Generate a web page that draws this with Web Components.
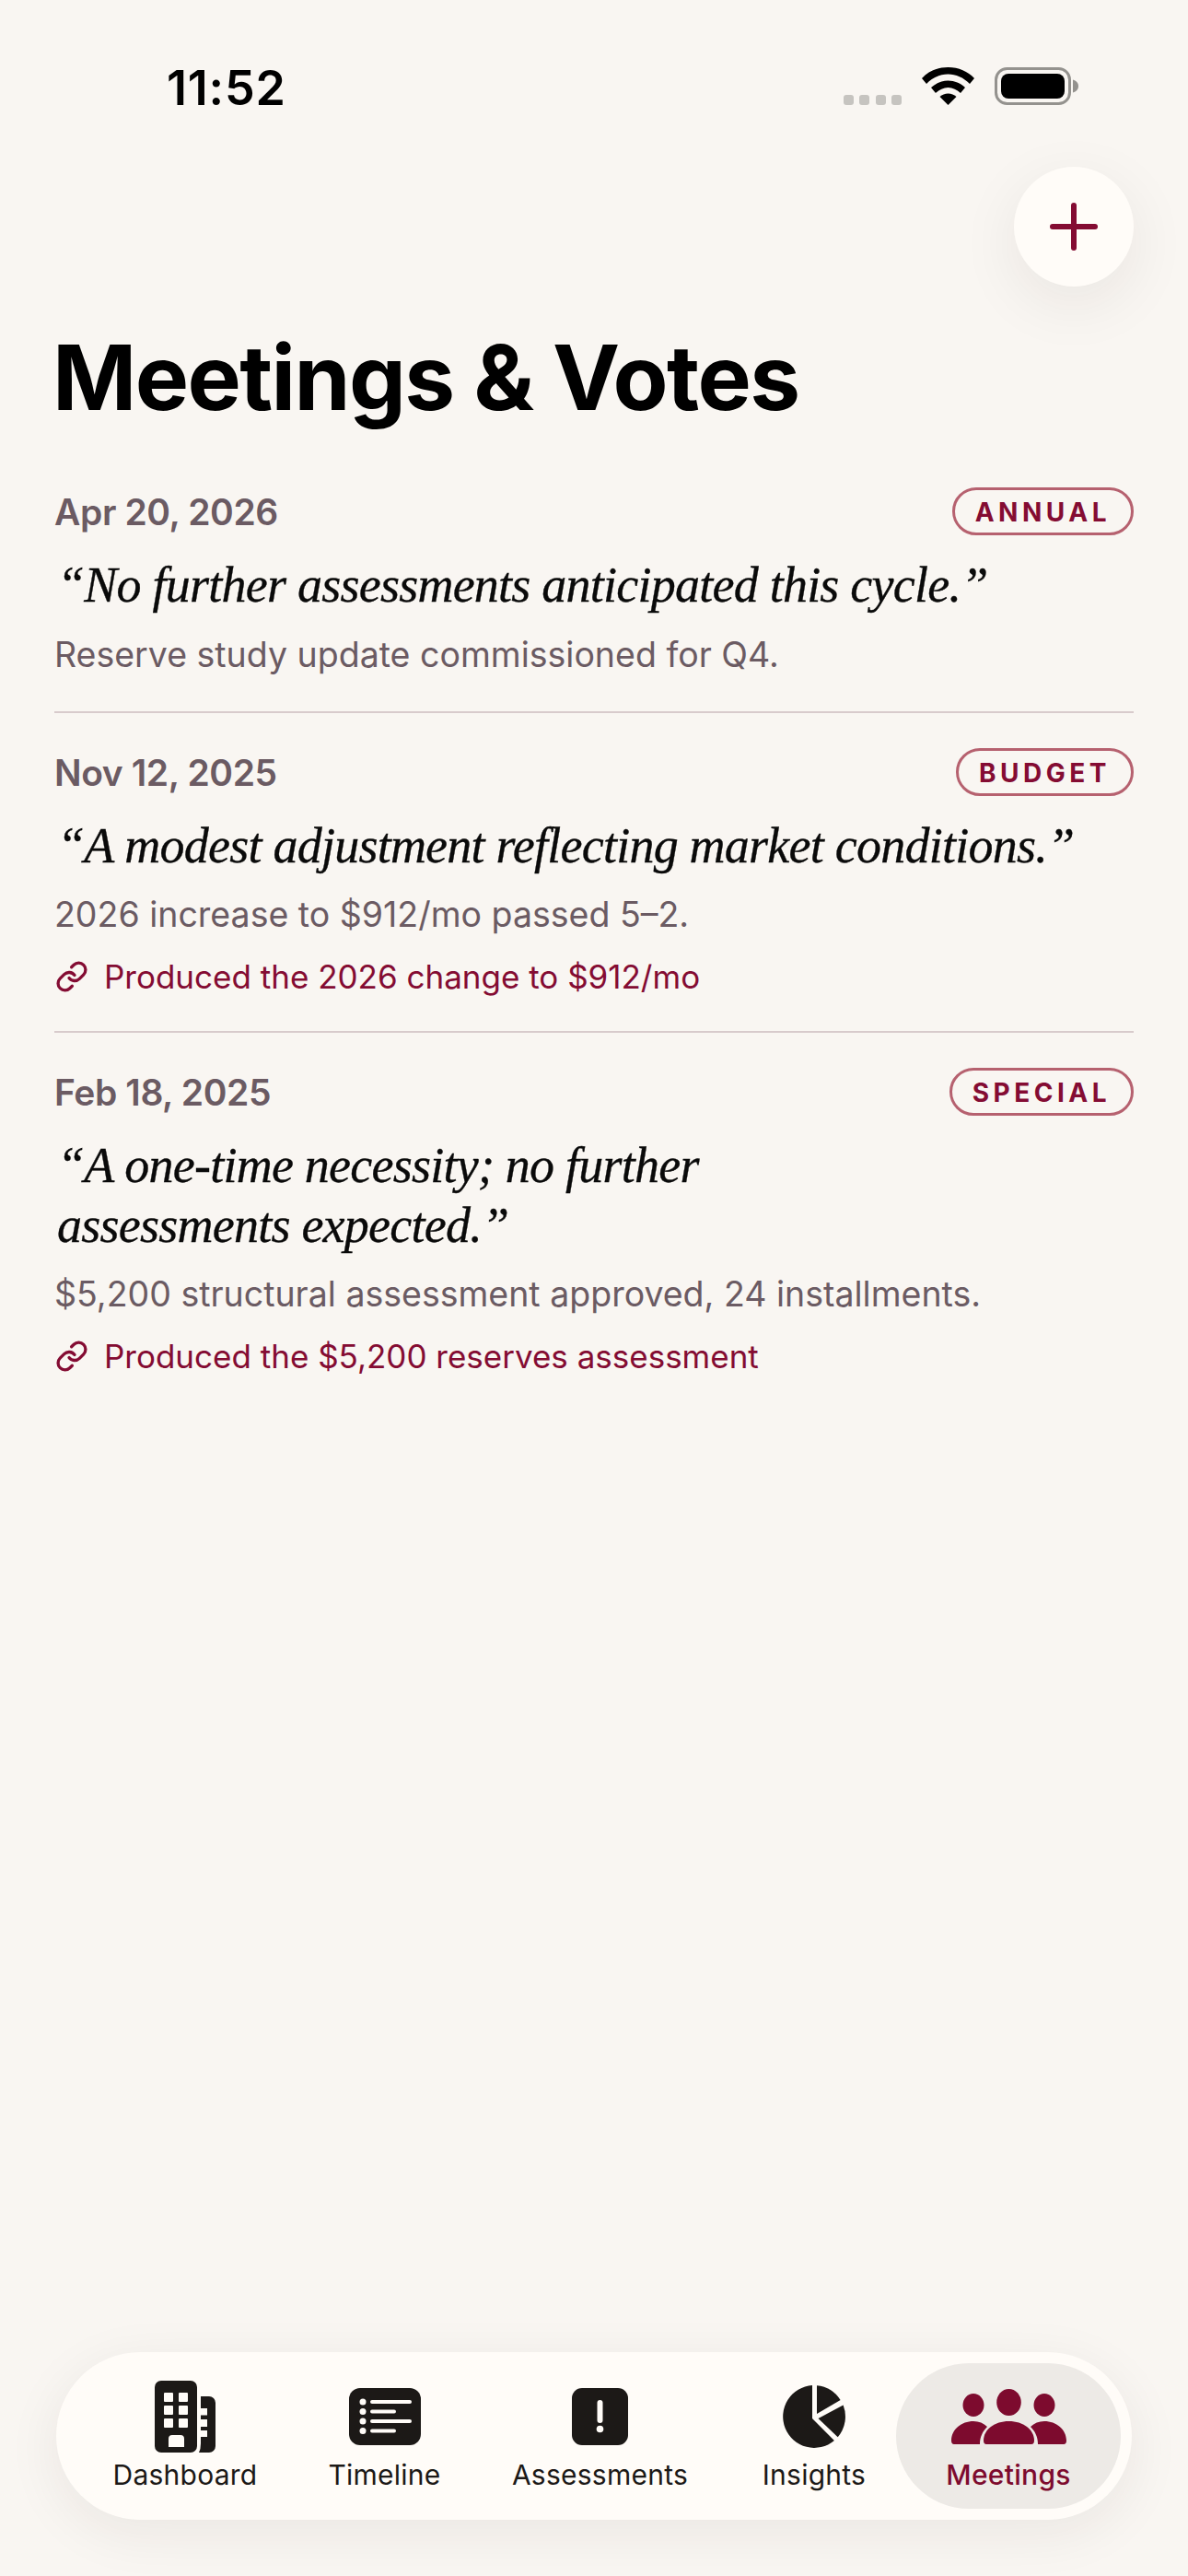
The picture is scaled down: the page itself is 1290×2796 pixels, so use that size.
<!DOCTYPE html>
<html lang="en">
<head>
<meta charset="utf-8">
<title>Meetings &amp; Votes</title>
<style>
  html, body { margin: 0; background: #f9f6f2; }
  body { font-family: Inter, "Liberation Sans", sans-serif; }
</style>
</head>
<body>
<app-screen>
  <status-bar slot="status" time="11:52"></status-bar>
  <fab-button slot="action"></fab-button>
  <page-title slot="title">Meetings &amp; Votes</page-title>

  <meeting-row date="Apr 20, 2026" kind="ANNUAL">
    <span slot="quote">“No further assessments anticipated this cycle.”</span>
    <span slot="note">Reserve study update commissioned for Q4.</span>
  </meeting-row>
  <meeting-row date="Nov 12, 2025" kind="BUDGET">
    <span slot="quote">“A modest adjustment reflecting market conditions.”</span>
    <span slot="note">2026 increase to $912/mo passed 5–2.</span>
    <span slot="link">Produced the 2026 change to $912/mo</span>
  </meeting-row>
  <meeting-row date="Feb 18, 2025" kind="SPECIAL" last>
    <span slot="quote">“A one-time necessity; no further<br>assessments expected.”</span>
    <span slot="note">$5,200 structural assessment approved, 24 installments.</span>
    <span slot="link">Produced the $5,200 reserves assessment</span>
  </meeting-row>

  <tab-bar slot="tabs">
    <tab-item label="Dashboard">
      <svg width="66" height="78" viewBox="0 0 66 78" fill="#1c1917">
        <path fill-rule="evenodd" d="M7 0H39a7 7 0 0 1 7 7V71a7 7 0 0 1-7 7H7a7 7 0 0 1-7-7V7a7 7 0 0 1 7-7ZM11 13a1 1 0 0 0-1 1V22a1 1 0 0 0 1 1H19a1 1 0 0 0 1-1V14a1 1 0 0 0-1-1ZM27 13a1 1 0 0 0-1 1V22a1 1 0 0 0 1 1H35a1 1 0 0 0 1-1V14a1 1 0 0 0-1-1ZM11 27a1 1 0 0 0-1 1V36a1 1 0 0 0 1 1H19a1 1 0 0 0 1-1V28a1 1 0 0 0-1-1ZM27 27a1 1 0 0 0-1 1V36a1 1 0 0 0 1 1H35a1 1 0 0 0 1-1V28a1 1 0 0 0-1-1ZM11 41a1 1 0 0 0-1 1V50a1 1 0 0 0 1 1H19a1 1 0 0 0 1-1V42a1 1 0 0 0-1-1ZM27 41a1 1 0 0 0-1 1V50a1 1 0 0 0 1 1H35a1 1 0 0 0 1-1V42a1 1 0 0 0-1-1ZM19 59a4 4 0 0 0-4 4V72H32V63a4 4 0 0 0-4-4Z"/>
        <path d="M50 17H59a7 7 0 0 1 7 7V71a7 7 0 0 1-7 7H48Q50 74 50 68V61H57V54H50V50H57V42H50V37.500H57V30H50Z"/>
      </svg>
    </tab-item>
    <tab-item label="Timeline">
      <svg width="78" height="62" viewBox="0 0 78 62">
        <rect width="78" height="62" rx="12" fill="#1c1917"/>
        <g fill="#fffcf8"><circle cx="15" cy="15" r="3.500"/><circle cx="15" cy="25.500" r="3.500"/><circle cx="15" cy="36" r="3.500"/><circle cx="15" cy="46.500" r="3.500"/></g>
        <g stroke="#fffcf8" stroke-width="4" stroke-linecap="round"><path d="M25 15H66"/><path d="M25 25.500H49"/><path d="M25 36H66"/><path d="M25 46.500H49"/></g>
      </svg>
    </tab-item>
    <tab-item label="Assessments">
      <svg width="61" height="62" viewBox="0 0 61 62">
        <rect width="61" height="62" rx="11" fill="#1c1917"/>
        <path d="M30.500 16V35" stroke="#fffcf8" stroke-width="6" stroke-linecap="round"/>
        <circle cx="30.500" cy="44.500" r="3.800" fill="#fffcf8"/>
      </svg>
    </tab-item>
    <tab-item label="Insights">
      <svg width="68" height="68" viewBox="0 0 68 68" fill="#1c1917">
        <path d="M32 36V0A34 34 0 1 0 55.900 60.100Z"/>
        <path d="M37 31V0.200A34 34 0 0 1 62.600 16Z"/>
        <path d="M38.500 36L65.600 21.600A34 34 0 0 1 59.700 56.200Z"/>
      </svg>
    </tab-item>
    <tab-item label="Meetings" active>
      <svg width="125" height="60" viewBox="0 0 125 60" fill="#7d0b2e">
        <ellipse cx="24" cy="17.500" rx="11.500" ry="12.500"/>
        <ellipse cx="62.500" cy="14.500" rx="13.300" ry="14.500"/>
        <ellipse cx="101" cy="17.500" rx="11.500" ry="12.500"/>
        <path d="M3 60Q0 60 0 56C0 44 11 35 24 35C30 35 35 37 39 41C34 46 31 52 31 60Z"/>
        <path d="M38 60Q35 60 35 56C35 44 47 35 62.500 35C78 35 90 44 90 56Q90 60 87 60Z"/>
        <path d="M122 60Q125 60 125 56C125 44 114 35 101 35C95 35 90 37 86 41C91 46 94 52 94 60Z"/>
      </svg>
    </tab-item>
  </tab-bar>
</app-screen>

<script>
class AppScreen extends HTMLElement {
  constructor() {
    super();
    this.attachShadow({ mode: "open" });
    this.shadowRoot.innerHTML = `
      <style>
        :host { display: flex; flex-direction: column; width: 1290px; height: 2796px; box-sizing: border-box; padding: 0 59px 61px; background: #f9f6f2; overflow: hidden; }
        .action { display: flex; justify-content: flex-end; }
        .list { display: flex; flex-direction: column; margin-top: 62px; }
        .tabs { margin-top: auto; }
      </style>
      <slot name="status"></slot>
      <div class="action"><slot name="action"></slot></div>
      <slot name="title"></slot>
      <div class="list"><slot></slot></div>
      <div class="tabs"><slot name="tabs"></slot></div>
    `;
  }
}
customElements.define("app-screen", AppScreen);

class StatusBar extends HTMLElement {
  connectedCallback() {
    const root = this.shadowRoot || this.attachShadow({ mode: "open" });
    root.innerHTML = `
      <style>
        :host { display: flex; justify-content: space-between; height: 181px; margin: 0 -59px; padding: 0 119px 0 181px; box-sizing: border-box; }
        .time { font: 600 52px/63px Inter, "Liberation Sans", sans-serif; color: #000; margin-top: 64px; letter-spacing: 0.8px; }
        .icons { display: flex; align-items: flex-start; margin-top: 73px; }
        .dots { display: flex; gap: 6.500px; margin-top: 30px; margin-right: 22px; }
        .dots i { width: 11px; height: 11px; border-radius: 3px; background: #c6c4c0; }
        svg { display: block; }
        .wifi { margin-right: 22px; }
      </style>
      <div class="time">${this.getAttribute("time") || ""}</div>
      <div class="icons">
        <div class="dots"><i></i><i></i><i></i><i></i></div>
        <svg class="wifi" width="57" height="41" viewBox="0 0 57 41" fill="#000">
          <path d="M28.500 0C40 0 50 4.500 57 12L52 18C45 11 37 7.500 28.500 7.500C20 7.500 12 11 5 18L0 12C7 4.500 17 0 28.500 0Z"/>
          <path d="M28.500 14.500C35.500 14.500 42 17.300 47 22L42 28C38 24.500 33.500 22 28.500 22C23.500 22 19 24.500 15 28L10 22C15 17.300 21.500 14.500 28.500 14.500Z"/>
          <path d="M28.500 28.500C32 28.500 35 29.800 37.500 32L28.500 41L19.500 32C22 29.800 25 28.500 28.500 28.500Z"/>
        </svg>
        <svg width="91" height="41" viewBox="0 0 91 41">
          <rect x="1.500" y="1.500" width="80" height="38" rx="12" fill="none" stroke="#94928e" stroke-width="3"/>
          <rect x="7" y="7" width="69" height="27" rx="8" fill="#000"/>
          <path d="M85 13.500C88.500 14.500 91 17 91 20.500C91 24 88.500 26.500 85 27.500Z" fill="#94928e"/>
        </svg>
      </div>
    `;
  }
}
customElements.define("status-bar", StatusBar);

class FabButton extends HTMLElement {
  constructor() {
    super();
    this.attachShadow({ mode: "open" });
    this.shadowRoot.innerHTML = `
      <style>
        :host { display: flex; align-items: center; justify-content: center; width: 130px; height: 130px; border-radius: 50%; background: #fffcf8; box-shadow: 0 18px 66px rgba(40, 30, 25, 0.075); }
      </style>
      <svg width="52" height="52" viewBox="0 0 52 52" stroke="#840c33" stroke-width="6" stroke-linecap="round">
        <path d="M26 3V49"/><path d="M3 26H49"/>
      </svg>
    `;
  }
}
customElements.define("fab-button", FabButton);

class PageTitle extends HTMLElement {
  constructor() {
    super();
    this.attachShadow({ mode: "open" });
    this.shadowRoot.innerHTML = `
      <style>
        :host { display: block; margin: 41px 0 0 -2px; font: 700 98px/115px Inter, "Liberation Sans", sans-serif; color: #000; letter-spacing: -1.600px; white-space: nowrap; }
      </style>
      <slot></slot>
    `;
  }
}
customElements.define("page-title", PageTitle);

class MeetingRow extends HTMLElement {
  connectedCallback() {
    const root = this.shadowRoot || this.attachShadow({ mode: "open" });
    const hasLink = !!this.querySelector('[slot="link"]');
    root.innerHTML = `
      <style>
        :host { display: block; padding-bottom: 35px; margin-bottom: 38px; border-bottom: 2px solid #d8cbcc; }
        :host([last]) { border-bottom: 0; }
        .head { display: flex; justify-content: space-between; align-items: center; height: 52px; }
        .date { padding-top: 2px; font: 600 39px/52px Inter, "Liberation Sans", sans-serif; color: #6b5b63; letter-spacing: -0.400px; }
        .badge { box-sizing: border-box; height: 52px; padding: 2px 22px 0; border: 3px solid #b6616f; border-radius: 26px; display: flex; align-items: center; font: 700 28px/1 Inter, "Liberation Sans", sans-serif; letter-spacing: 4.500px; color: #840c33; }
        .quote { margin-top: 22px; padding-left: 3px; font: italic 400 54px/64.500px "Liberation Serif", serif; color: #0a0a0a; letter-spacing: -0.760px; -webkit-text-stroke: 0.350px #0a0a0a; }
        .note { margin-top: 17px; font: 400 37.500px/52px Inter, "Liberation Sans", sans-serif; color: #6b5b63; }
        .link { margin-top: 17px; display: flex; align-items: center; gap: 17px; font: 400 35px/48px Inter, "Liberation Sans", sans-serif; color: #840c33; }
        .link svg { flex: none; margin-left: 1px; }
      </style>
      <div class="head">
        <div class="date">${this.getAttribute("date") || ""}</div>
        <div class="badge">${this.getAttribute("kind") || ""}</div>
      </div>
      <div class="quote"><slot name="quote"></slot></div>
      <div class="note"><slot name="note"></slot></div>
      ${hasLink ? `<div class="link">
        <svg width="36" height="36" viewBox="0 0 24 24" fill="none" stroke="#840c33" stroke-width="2.200" stroke-linecap="round" stroke-linejoin="round">
          <path d="M10 13a5 5 0 0 0 7.540.540l3-3a5 5 0 0 0-7.070-7.070l-1.720 1.710"/>
          <path d="M14 11a5 5 0 0 0-7.540-.540l-3 3a5 5 0 0 0 7.070 7.070l1.710-1.710"/>
        </svg>
        <slot name="link"></slot>
      </div>` : ""}
    `;
  }
}
customElements.define("meeting-row", MeetingRow);

class TabBar extends HTMLElement {
  constructor() {
    super();
    this.attachShadow({ mode: "open" });
    this.shadowRoot.innerHTML = `
      <style>
        :host { display: grid; grid-template-columns: 256px 177px 291px 174px 1fr; box-sizing: border-box; width: 1168px; height: 182px; margin-left: 2px; padding: 12px; border-radius: 91px; background: #fffcf8; box-shadow: 0 14px 60px rgba(40, 30, 25, 0.07); }
      </style>
      <slot></slot>
    `;
  }
}
customElements.define("tab-bar", TabBar);

class TabItem extends HTMLElement {
  connectedCallback() {
    const root = this.shadowRoot || this.attachShadow({ mode: "open" });
    root.innerHTML = `
      <style>
        :host { position: relative; display: block; height: 158px; color: #1c1917; }
        :host([active]) { width: 244px; justify-self: end; border-radius: 79px; background: #edeae6; color: #7d0b2e; }
        .icon { display: flex; align-items: center; justify-content: center; height: 78px; margin-top: 19px; }
        .label { margin-top: 5.500px; text-align: center; font: 400 30px/36px Inter, "Liberation Sans", sans-serif; letter-spacing: 0.250px; }
        :host([active]) .label { font-weight: 500; letter-spacing: 0.300px; }
        ::slotted(svg) { display: block; }
      </style>
      <div class="icon"><slot></slot></div>
      <div class="label">${this.getAttribute("label") || ""}</div>
    `;
  }
}
customElements.define("tab-item", TabItem);
</script>
</body>
</html>
